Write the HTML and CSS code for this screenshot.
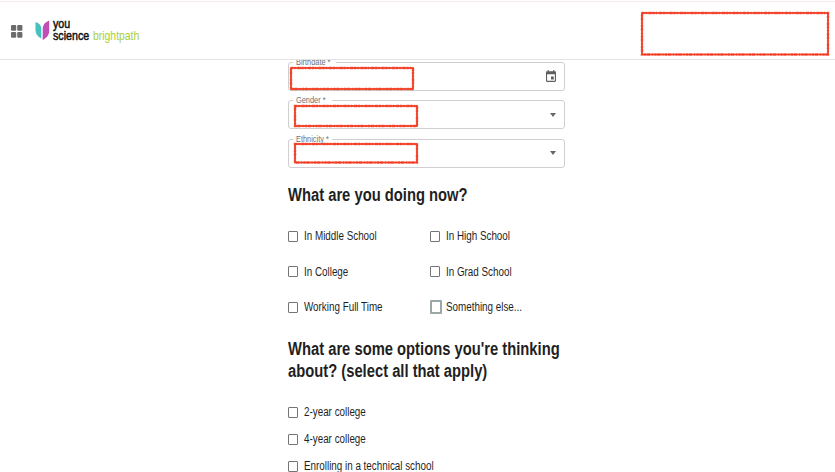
FILE: index.html
```html
<!DOCTYPE html>
<html lang="en">
<head>
    <meta charset="UTF-8">
    <meta name="viewport" content="width=device-width, initial-scale=1.0">
    <title>YouScience Brightpath</title>
    <link rel="stylesheet" href="styles.css">
</head>
<body>
    <header class="topbar">
        <svg class="grid-icon" viewBox="0 0 12 13" fill="#6b6b6b">
            <rect x="0" y="0" width="5.200" height="5.700" rx="1"/>
            <rect x="6.200" y="0" width="5.200" height="5.700" rx="1"/>
            <rect x="0" y="7" width="5.200" height="5.700" rx="1"/>
            <rect x="6.200" y="7" width="5.200" height="5.700" rx="1"/>
        </svg>
        <div class="logo">
            <svg class="logo-mark" viewBox="0 0 16 21">
                <path d="M.5 2C4 3 6.300 5.500 6.300 9v9.500C2.500 16.500.5 14 .5 10z" fill="#45c1bf"/>
                <path d="M14.200.5v10c0 4.500-2.500 7.500-6.500 9.500V9c0-4 2.500-7 6.500-8.500z" fill="#c04fb5"/>
            </svg>
            <div class="logo-text">
                <div class="logo-line"><span class="narrow you">you</span></div>
                <div class="logo-line"><span class="narrow science">science</span><span class="narrow bright">brightpath</span></div>
            </div>
        </div>
        <svg class="mask mask-account" width="190" height="46">
            <rect x="2" y="2" width="186" height="41.500"/>
            <rect class="rough" x="2" y="2" width="186" height="41.500"/>
        </svg>
    </header>

    <main class="form">
        <div class="field">
            <div class="label label-birth"><span class="narrow">Birthdate *</span></div>
            <svg class="mask mask-birth" width="127" height="25">
                <rect x="2" y="2" width="122" height="21"/>
                <rect class="rough" x="2" y="2" width="122" height="21"/>
            </svg>
            <svg class="calendar" viewBox="3 1 18 20" preserveAspectRatio="none" fill="#5f5f5f">
                <path d="M17 12h-5v5h5v-5zM16 1v2H8V1H6v2H5c-1.110 0-1.990.9-1.990 2L3 19c0 1.100.890 2 2 2h14c1.100 0 2-.9 2-2V5c0-1.100-.9-2-2-2h-1V1h-2zm3 18H5V8h14v11z"/>
            </svg>
        </div>
        <div class="field">
            <div class="label"><span class="narrow">Gender *</span></div>
            <svg class="mask mask-gender" width="127" height="24">
                <rect x="2" y="2" width="122" height="20"/>
                <rect class="rough" x="2" y="2" width="122" height="20"/>
            </svg>
            <span class="arrow"></span>
        </div>
        <div class="field">
            <div class="label"><span class="narrow">Ethnicity *</span></div>
            <svg class="mask" width="127" height="23">
                <rect x="2" y="2" width="122" height="18.500"/>
                <rect class="rough" x="2" y="2" width="122" height="18.500"/>
            </svg>
            <span class="arrow"></span>
        </div>

        <h2><span class="narrow">What are you doing now?</span></h2>
        <div class="options">
            <label class="option"><span class="box"></span><span class="narrow">In Middle School</span></label>
            <label class="option"><span class="box"></span><span class="narrow">In High School</span></label>
            <label class="option"><span class="box"></span><span class="narrow">In College</span></label>
            <label class="option"><span class="box"></span><span class="narrow">In Grad School</span></label>
            <label class="option"><span class="box"></span><span class="narrow">Working Full Time</span></label>
            <label class="option"><span class="box box-focus"></span><span class="narrow">Something else...</span></label>
        </div>

        <h2><span class="narrow">What are some options you're thinking<br>about? (select all that apply)</span></h2>
        <div class="list">
            <label class="option"><span class="box"></span><span class="narrow">2-year college</span></label>
            <label class="option"><span class="box"></span><span class="narrow">4-year college</span></label>
            <label class="option"><span class="box"></span><span class="narrow">Enrolling in a technical school</span></label>
        </div>
    </main>
</body>
</html>
```
FILE: styles.css
```css
* {
    box-sizing: border-box;
}

body {
    margin: 0;
    height: 472px;
    overflow: hidden;
    background: #fff;
    color: #1f1f1f;
    font-family: "Liberation Sans", Arial, sans-serif;
}

/* condensed look for all text */
.narrow {
    display: inline-block;
    white-space: nowrap;
    transform: scaleX(0.82);
    transform-origin: left center;
}

.topbar {
    position: relative;
    z-index: 2;
    display: flex;
    align-items: flex-start;
    height: 60px;
    padding: 0 5px 0 11px;
    background: #fff;
    border-bottom: 1px solid #e4e4e4;
    box-shadow: inset 0 1px 0 #fff, inset 0 2px 0 #fae5e7;
}

.grid-icon {
    width: 12px;
    height: 13px;
    margin-top: 25px;
}

.logo {
    display: flex;
    margin: 20px 0 0 12px;
}

.logo-mark {
    width: 16px;
    height: 21px;
}

.logo-text {
    margin: -2px 0 0 2px;
    font-size: 13px;
    line-height: 11.500px;
}

.logo-line {
    display: flex;
    height: 11.500px;
}

.you,
.science {
    color: #111;
    -webkit-text-stroke: 0.5px #111;
    transform: scaleX(0.82);
}

.science {
    width: 40px;
}

.bright {
    color: #a9cf38;
    transform: scaleX(0.8);
}

.mask {
    display: block;
    overflow: visible;
    fill: none;
    stroke: #f23a20;
    stroke-width: 1.800;
}

/* uneven marker edge over the plain outline */
.mask .rough {
    stroke-width: 2.800;
    stroke-dasharray: 2 1.5 1 2 3 1;
    stroke-opacity: 0.45;
}

.mask-account {
    margin: 11px 0 0 auto;
}

.form {
    width: 277px;
    margin: 2px 0 0 288px;
}

.field {
    position: relative;
    display: flex;
    align-items: center;
    justify-content: space-between;
    height: 29px;
    margin-bottom: 9.300px;
    padding: 0 7px 0 4px;
    border: 1px solid #cfcfcf;
    border-radius: 3px;
}

.field .mask-birth {
    margin: 3px 0 0 -4px;
}

.field .mask-gender {
    margin-top: 2px;
}

.label {
    position: absolute;
    top: -3px;
    left: 4px;
    width: 39px;
    height: 4px;
    padding-left: 3px;
    background: #fff;
    color: #707070;
    font-size: 9px;
    line-height: 4px;
}

.label-birth {
    width: 43px;
}

.calendar {
    width: 10px;
    height: 12px;
    margin: 0 1px 1px 0;
}

.arrow {
    margin-right: 1px;
    border: 3px solid transparent;
    border-top: 4px solid #666;
    border-bottom: 0;
}

h2 {
    margin: 0;
    font-size: 18px;
    line-height: 22px;
}

.field + h2 {
    margin-top: 16px;
}

.options {
    display: grid;
    grid-template-columns: 142px 1fr;
    grid-auto-rows: 35.400px;
    margin: 13px 0;
}

.option {
    display: flex;
    align-items: center;
    gap: 6px;
    font-size: 12px;
}

.box {
    flex: none;
    width: 10px;
    height: 11px;
    border: 1px solid #747474;
    border-radius: 1px;
}

.box-focus {
    width: 12px;
    height: 14px;
    margin-right: -2px;
    border: 2px solid #9ba8a8;
}

.list {
    display: grid;
    grid-auto-rows: 27px;
    margin-top: 17px;
}
```
